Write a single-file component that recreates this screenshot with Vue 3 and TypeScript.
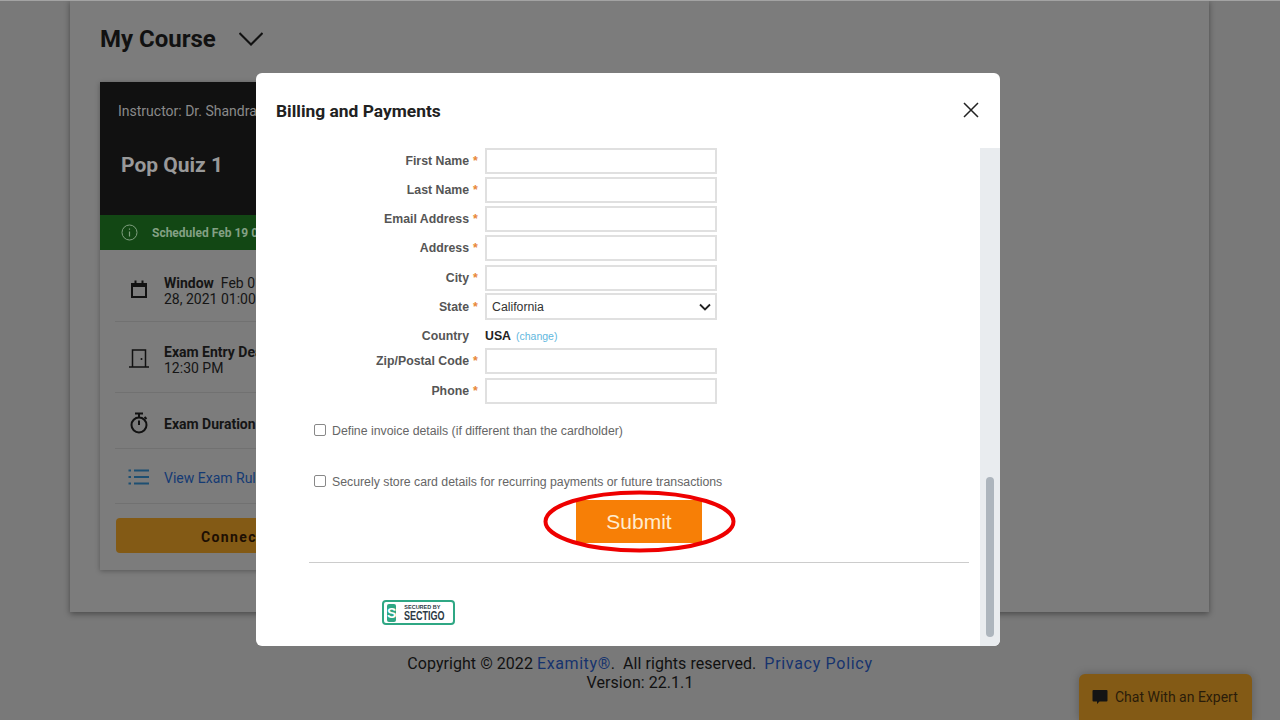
<script setup lang="ts">
interface Row { label: string; required: boolean; kind: 'input' | 'select' | 'static'; gap: number }
const rows: Row[] = [
  { label: 'First Name', required: true, kind: 'input', gap: 0 },
  { label: 'Last Name', required: true, kind: 'input', gap: 3 },
  { label: 'Email Address', required: true, kind: 'input', gap: 3 },
  { label: 'Address', required: true, kind: 'input', gap: 3 },
  { label: 'City', required: true, kind: 'input', gap: 4 },
  { label: 'State', required: true, kind: 'select', gap: 2 },
  { label: 'Country', required: false, kind: 'static', gap: 4 },
  { label: 'Zip/Postal Code', required: true, kind: 'input', gap: 0 },
  { label: 'Phone', required: true, kind: 'input', gap: 4 },
]
</script>

<template>
  <div class="page">
    <section class="panel">
      <header class="course-head">
        <h1>My Course</h1>
        <svg class="chev" width="24" height="14" viewBox="0 0 24 14"><path d="M0.500 1 L12 12.500 L23.500 1" fill="none" stroke="#111" stroke-width="2" /></svg>
      </header>
      <article class="exam">
        <div class="exam-top">
          <div class="instructor">Instructor: Dr. Shandra</div>
          <div class="quiz">Pop Quiz 1</div>
        </div>
        <div class="status">
          <svg width="17" height="17" viewBox="0 0 17 17"><circle cx="8.500" cy="8.500" r="7.500" fill="none" stroke="#7f9f7f" stroke-width="1" /><path d="M8.500 7.500v5M8.500 4.500v1.300" stroke="#7f9f7f" stroke-width="1.200" /></svg>
          <span>Scheduled Feb 19 01:00 PM</span>
        </div>
        <div class="info win">
          <svg class="ico" width="20" height="20" viewBox="0 0 20 20"><path d="M3 5h14v13H3z" fill="none" stroke="#111" stroke-width="2" /><path d="M3 6.500h14" stroke="#111" stroke-width="3" /><path d="M6.500 1.500v3M13.500 1.500v3" stroke="#111" stroke-width="2" /></svg>
          <p><b>Window</b>&nbsp; Feb 01, 2021 12:00 AM - Feb<br />28, 2021 01:00 PM</p>
        </div>
        <div class="info entry">
          <svg class="ico" width="20" height="20" viewBox="0 0 20 20"><path d="M0 19h20M3.500 19V2h13v17" fill="none" stroke="#111" stroke-width="1.500" /><circle cx="12.500" cy="11" r="1" fill="#111" /></svg>
          <p><b>Exam Entry Deadline</b> Feb 19, 2021<br />12:30 PM</p>
        </div>
        <div class="info dur">
          <svg class="ico" width="20" height="22" viewBox="0 0 20 22"><circle cx="10" cy="13" r="7.500" fill="none" stroke="#111" stroke-width="2" /><path d="M6 1.500h8M10 2v3M10 13V8.500M15.500 5l2 2" fill="none" stroke="#111" stroke-width="2" /></svg>
          <p><b>Exam Duration</b> 60 minutes</p>
        </div>
        <div class="info rules">
          <svg class="ico" width="22" height="18" viewBox="0 0 22 18"><path d="M6 2.500h15M6 9h15M6 15.500h15M0.500 2.500h2.500M0.500 9h2.500M0.500 15.500h2.500" fill="none" stroke="#1d4f72" stroke-width="2" /></svg>
          <p class="rule-link">View Exam Rules</p>
        </div>
        <div class="connect">Connect</div>
      </article>
    </section>
    <footer class="foot">
      <div>Copyright © 2022 <a class="l1">Examity®</a>.&nbsp; All rights reserved.&nbsp; <a class="l2">Privacy Policy</a></div>
      <div>Version: 22.1.1</div>
    </footer>
    <div class="chat">
      <svg width="16" height="16" viewBox="0 0 16 16"><path d="M1.500 1h13a1 1 0 0 1 1 1v9.500a1 1 0 0 1-1 1H7.500L5 15v-2.500H1.500a1 1 0 0 1-1-1V2a1 1 0 0 1 1-1z" fill="#141414" /></svg>
      <span>Chat With an Expert</span>
    </div>

    <div class="modal" role="dialog">
      <div class="modal-head">
        <h2>Billing and Payments</h2>
        <svg class="close" width="16" height="16" viewBox="0 0 16 16"><path d="M1 1 L15 15 M15 1 L1 15" stroke="#222" stroke-width="1.500" /></svg>
      </div>
      <div class="modal-body">
        <div class="content">
          <form class="form">
            <div v-for="r in rows" :key="r.label" class="row" :class="r.kind" :style="{ marginTop: r.gap + 'px' }">
              <label>{{ r.label }}</label>
              <span class="star">{{ r.required ? '*' : '' }}</span>
              <div v-if="r.kind === 'input'" class="field"></div>
              <div v-else-if="r.kind === 'select'" class="field sel">
                <span>California</span>
                <svg width="12" height="8" viewBox="0 0 12 8"><path d="M1 1.500 L6 6.500 L11 1.500" fill="none" stroke="#222" stroke-width="1.800" /></svg>
              </div>
              <div v-else class="country"><b>USA</b><a>(change)</a></div>
            </div>
          </form>
          <div class="check first"><i></i><span>Define invoice details (if different than the cardholder)</span></div>
          <div class="check second"><i></i><span>Securely store card details for recurring payments or future transactions</span></div>
          <div class="submit-wrap">
            <button type="button" class="submit">Submit</button>
            <svg class="ring" width="193" height="63" viewBox="0 0 193 63"><ellipse cx="96.500" cy="31.500" rx="94" ry="29" fill="none" stroke="#ee0000" stroke-width="4" /></svg>
          </div>
          <hr />
          <div class="sectigo">
            <span class="s-mark">S</span>
            <span class="s-text"><small>SECURED BY</small><strong>SECTIGO</strong></span>
          </div>
        </div>
        <div class="track"><div class="thumb"></div></div>
      </div>
    </div>
  </div>
</template>

<style>
html, body { margin: 0; background: #797979; }
</style>

<style scoped>
.page { position: relative; width: 1280px; height: 720px; overflow: hidden; background: #797979; font-family: Roboto, sans-serif; border-top: 1px solid #a3a3a3; box-sizing: border-box; }
.panel { margin: -1px 0 0 70px; width: 1139px; height: 612px; box-sizing: border-box; padding: 0 30px; background: #7c7c7c; box-shadow: 0 2px 6px rgba(0,0,0,.4); }
.course-head { height: 82px; display: flex; align-items: center; gap: 23px; padding-bottom: 4px; box-sizing: border-box; }
h1 { margin: 0; font-size: 24px; font-weight: 700; color: #111; }
.exam { width: 400px; height: 488px; background: #7c7c7c; box-shadow: 0 1px 5px rgba(0,0,0,.3); overflow: hidden; }
.exam-top { height: 133px; background: #111; padding: 21px 0 0 18px; box-sizing: border-box; }
.instructor { font-size: 14px; line-height: 16px; color: #8a8a8a; white-space: nowrap; }
.quiz { margin: 32px 0 0 3px; font-size: 21px; line-height: 28px; font-weight: 700; color: #999; }
.status { height: 35px; background: #124714; display: flex; align-items: center; gap: 14px; padding-left: 21px; font-size: 12px; font-weight: 700; color: #84a084; white-space: nowrap; }
.info { margin: 0 0 0 15px; display: flex; align-items: center; gap: 14px; border-bottom: 1px solid #717171; }
.info .ico { flex: none; width: 22px; margin-left: 13px; }
.info p { margin: 0; font-size: 14px; line-height: 16px; color: #151515; white-space: nowrap; }
.info b { font-weight: 700; }
.win { height: 71px; }
.win .ico { margin-top: 6px; }
.win p { margin-top: 10px; }
.entry { height: 70px; }
.entry .ico { margin-top: 2px; }
.entry p { margin-top: 6px; }
.dur { height: 55px; }
.dur .ico { margin-top: 4px; }
.dur p { margin-top: 6px; }
.rules { height: 54px; }
.rules .ico { margin-top: 2px; }
.rules p { margin-top: 3px; }
.rule-link { color: #143a74 !important; }
.connect { margin: 14px 16px 0; height: 35px; background: #835a15; border-radius: 4px; padding-left: 85px; font-size: 14px; font-weight: 700; letter-spacing: 1.400px; line-height: 39px; color: #1d0f03; }
.foot { margin-top: 42px; text-align: center; font-size: 16px; line-height: 19px; letter-spacing: .05px; color: #111; }
.foot a { color: #16336e; }
.foot .l1 { letter-spacing: .6px; }
.foot .l2 { letter-spacing: .7px; }
.chat { position: absolute; left: 1079px; bottom: 0; width: 173px; height: 46px; box-sizing: border-box; padding-left: 13px; display: flex; align-items: center; gap: 7px; background: #835a15; border-radius: 6px 6px 0 0; box-shadow: 0 0 8px rgba(0,0,0,.25); font-size: 14px; color: #2a1c0a; }
.modal { position: absolute; left: 256px; top: 72px; width: 744px; height: 573px; background: #fff; border-radius: 6px; overflow: hidden; }
.modal-head { height: 75px; display: flex; align-items: center; justify-content: space-between; padding: 0 21px 0 20px; box-sizing: border-box; }
.close { margin-top: -2px; }
h2 { margin: 0; font-size: 17.400px; font-weight: 700; color: #212121; }
.modal-body { display: flex; height: 498px; }
.content { flex: 1; font-family: "Liberation Sans", Arial, sans-serif; color: #555; }
.form { padding-left: 118px; }
.row { display: grid; grid-template-columns: 95px 16px 232px; align-items: center; height: 26px; font-size: 12.300px; }
.row label { text-align: right; font-weight: 700; color: #555; white-space: nowrap; }
.star { color: #e8873a; font-weight: 700; padding-left: 4px; }
.field { box-sizing: border-box; height: 26px; border: 2px solid #e0e0e0; background: #fff; }
.sel { display: flex; align-items: center; justify-content: space-between; padding: 0 4px 0 5px; height: 27px; color: #333; }
.static { height: 25px; }
.country { display: flex; align-items: center; gap: 5px; }
.country b { color: #222; font-size: 12.300px; }
.country a { color: #5fb7de; font-size: 10.500px; }
.check { display: flex; align-items: center; gap: 6px; margin-left: 58px; font-size: 12.300px; color: #666; white-space: nowrap; }
.check i { width: 10px; height: 10px; border: 1px solid #888; border-radius: 2px; margin-top: -3px; }
.check.first { margin-top: 20px; }
.check.second { margin-top: 37px; }
.submit-wrap { position: relative; margin: 11px 0 0 320px; width: 126px; height: 43px; }
.submit { width: 126px; height: 43px; border: 0; padding: 0; background: #f77f06; color: #ffeccf; font: 21px "Liberation Sans", Arial, sans-serif; }
.ring { position: absolute; left: -33px; top: -10px; }
hr { margin: 19px 11px 0 53px; border: 0; border-top: 1px solid #ccc; }
.sectigo { margin: 37px 0 0 126px; width: 73px; height: 25px; box-sizing: border-box; border: 2px solid #2fa784; border-radius: 4px; display: flex; align-items: center; gap: 8px; padding-left: 3px; }
.s-mark { width: 13px; height: 18px; background: #2fa784; border-radius: 2px; color: #fff; font-size: 14px; font-weight: 700; line-height: 18px; text-align: center; }
.s-text { display: flex; flex-direction: column; color: #2d3a45; white-space: nowrap; }
.s-text small { font-size: 5.500px; line-height: 7px; font-weight: 700; }
.s-text strong { font-size: 12px; line-height: 11px; transform: scaleX(.75); transform-origin: left center; }
.track { flex: none; width: 20px; height: 498px; box-sizing: border-box; background: #e9ecef; padding: 329px 6px 9px; }
.thumb { height: 160px; background: #adb5bd; border-radius: 4px; }
</style>
